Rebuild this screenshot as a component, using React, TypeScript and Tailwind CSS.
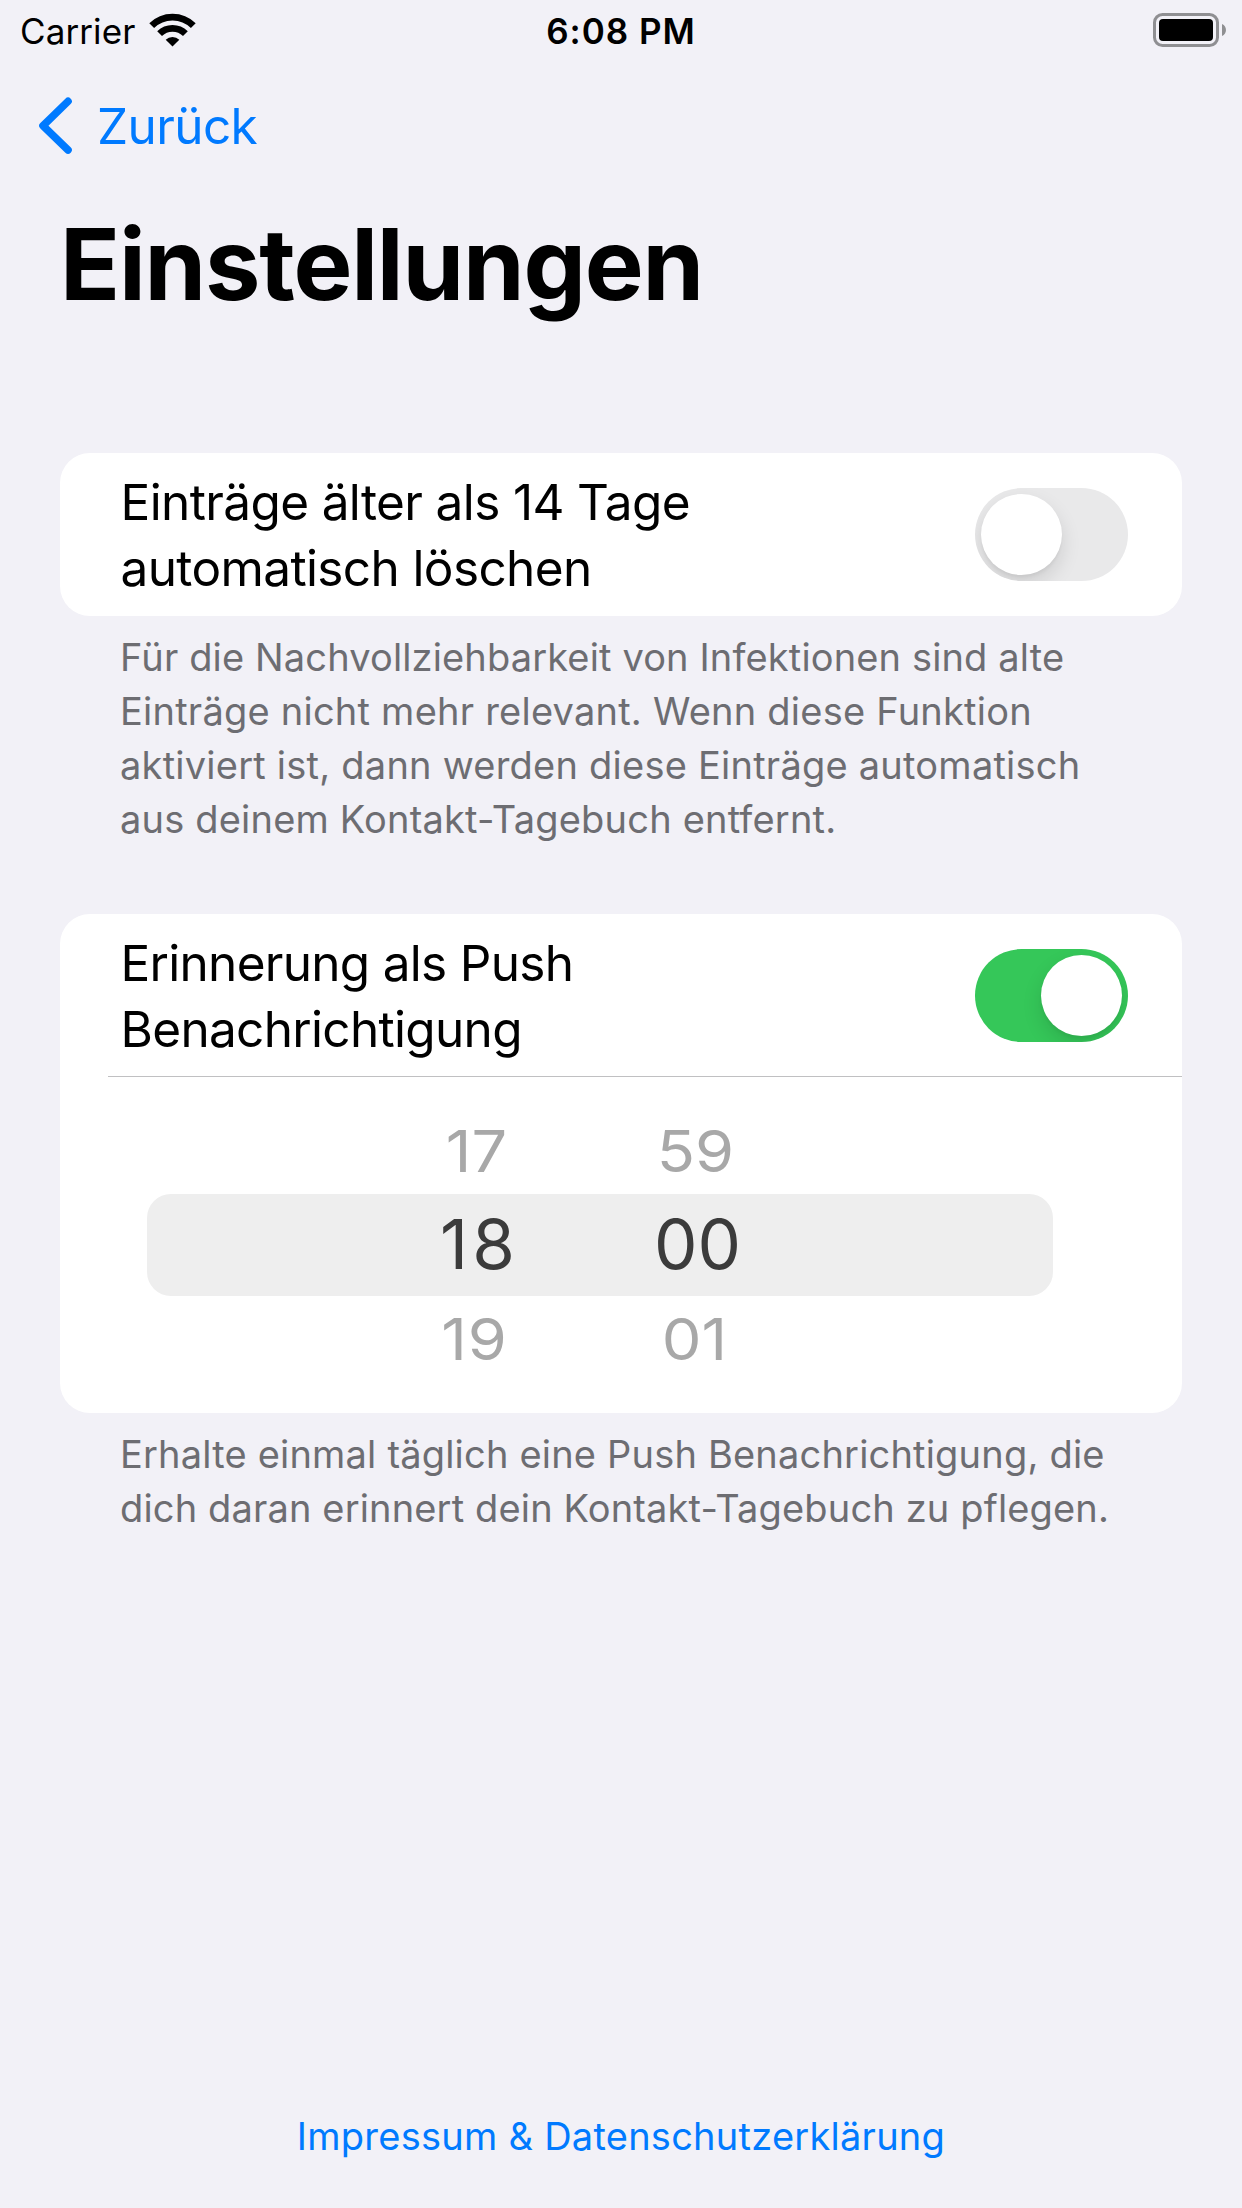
import type { ReactNode } from 'react'

function WifiIcon() {
  return (
    <svg className="ml-[13.5px] h-[34px] w-[47px]" viewBox="148.5 12.5 47 34" fill="none" stroke="#000" strokeWidth="6.8">
      <path d="M151.2 25.2A29.5 29.5 0 0 1 192.8 25.2" />
      <path d="M159.1 33.1A18.3 18.3 0 0 1 184.9 33.1" />
      <path d="M172 46L165.2 39.2A9.8 9.8 0 0 1 178.8 39.2Z" fill="#000" stroke="none" />
    </svg>
  )
}

function BatteryIcon() {
  return (
    <svg className="mr-[15px] h-[34px] w-[74px]" viewBox="0 0 74 34">
      <rect x="1.5" y="1.5" width="63" height="31" rx="8" fill="none" stroke="#8f8f92" strokeWidth="3" />
      <rect x="6" y="6" width="54" height="22" rx="4" fill="#000" />
      <path d="M69 11C74.3 13 74.3 21 69 23Z" fill="#8f8f92" />
    </svg>
  )
}

function StatusBar() {
  return (
    <div className="grid h-[62px] grid-cols-3 items-start text-[35px] leading-[62px]">
      <div className="flex items-start pl-[20px]">
        <span className="tracking-[0.1px]">Carrier</span>
        <div className="pt-[12.5px]">
          <WifiIcon />
        </div>
      </div>
      <div className="text-center font-[570] tracking-[1px]">6:08 PM</div>
      <div className="flex justify-end pt-[13px]">
        <BatteryIcon />
      </div>
    </div>
  )
}

function Toggle({ on }: { on: boolean }) {
  return (
    <button
      role="switch"
      aria-checked={on}
      className={
        on
          ? 'flex h-[93px] w-[153px] shrink-0 justify-end overflow-hidden rounded-full bg-[#35c759] p-[6px]'
          : 'flex h-[93px] w-[153px] shrink-0 justify-start overflow-hidden rounded-full bg-[#e9e9ea] p-[6px]'
      }
    >
      <span className="size-[81px] rounded-full bg-white shadow-[0_9px_20px_rgba(0,0,0,0.12),0_3px_3px_rgba(0,0,0,0.04)]" />
    </button>
  )
}

function SettingRow({ on, children }: { on: boolean; children: ReactNode }) {
  return (
    <div className="flex h-[163px] items-center justify-between pr-[54px] pl-[60.5px]">
      <p className="text-[49.5px] leading-[66px] tracking-[-0.62px]">{children}</p>
      <Toggle on={on} />
    </div>
  )
}

function FootNote({ children }: { children: ReactNode }) {
  return (
    <p className="pt-[14px] pl-[60px] text-[38px] leading-[54px] tracking-[0.19px] whitespace-nowrap text-[#6d6d72]">
      {children}
    </p>
  )
}

function TimePicker() {
  return (
    <div className="ml-[87px] flex h-[336px] w-[906px] flex-col">
      <div className="flex h-[117px] items-center pt-[31px] pl-[220px] text-[63px] text-[#a8a8a8]">
        <span className="w-[219px] scale-y-[0.91] text-center">17</span>
        <span className="w-[219px] scale-y-[0.91] text-center">59</span>
      </div>
      <div className="flex h-[102px] items-center rounded-[24px] bg-[#eeeeee] pl-[223px] text-[69px] text-[#3b3b3b]">
        <span className="w-[219px] text-center tracking-[4px]">18</span>
        <span className="w-[217px] text-center">00</span>
      </div>
      <div className="flex h-[117px] items-center pb-[31px] pl-[218px] text-[63px] text-[#a8a8a8]">
        <span className="w-[219px] scale-y-[0.91] text-center tracking-[1px]">19</span>
        <span className="w-[221px] scale-y-[0.91] text-center">01</span>
      </div>
    </div>
  )
}

export default function App() {
  return (
    <div className="flex h-[2208px] w-[1242px] flex-col bg-[#f2f1f7] font-['Inter','Liberation_Sans',sans-serif] text-black">
      <StatusBar />
      <nav className="flex h-[128px] items-center pl-[38px] text-[#007aff]">
        <svg className="h-[60px] w-[36px]" viewBox="0 0 36 60" fill="none" stroke="currentColor" strokeWidth="7.6" strokeLinecap="round" strokeLinejoin="round">
          <path d="M30 5.4L5 29.7L30 54" />
        </svg>
        <span className="ml-[23px] text-[49.5px] leading-[66px] tracking-[-0.6px]">Zurück</span>
      </nav>
      <h1 className="pl-[60px] text-[99px] leading-[148px] font-bold tracking-[-1.18px]">Einstellungen</h1>

      <main className="mx-[60px] mt-[115px]">
        <section>
          <div className="rounded-[30px] bg-white">
            <SettingRow on={false}>
              Einträge älter als 14 Tage
              <br />
              automatisch löschen
            </SettingRow>
          </div>
          <FootNote>
            <span className="tracking-[0.14px]">Für die Nachvollziehbarkeit von Infektionen sind alte</span>
            <br />
            <span className="tracking-[0.23px]">Einträge nicht mehr relevant. Wenn diese Funktion</span>
            <br />
            <span className="tracking-[0.23px]">aktiviert ist, dann werden diese Einträge automatisch</span>
            <br />
            aus deinem Kontakt-Tagebuch entfernt.
          </FootNote>
        </section>

        <section className="mt-[68px]">
          <div className="rounded-[30px] bg-white">
            <SettingRow on>
              <span className="tracking-[-0.7px]">Erinnerung als Push</span>
              <br />
              <span className="tracking-[-0.68px]">Benachrichtigung</span>
            </SettingRow>
            <div className="-mt-px ml-[48px] h-px bg-[#c0c0c2]" />
            <TimePicker />
          </div>
          <FootNote>
            Erhalte einmal täglich eine Push Benachrichtigung, die
            <br />
            <span className="tracking-[0.15px]">dich daran erinnert dein Kontakt-Tagebuch zu pflegen.</span>
          </FootNote>
        </section>
      </main>

      <a className="mt-auto pb-[45px] text-center text-[38px] leading-[54px] tracking-[0.25px] text-[#007aff]">
        Impressum &amp; Datenschutzerklärung
      </a>
    </div>
  )
}
